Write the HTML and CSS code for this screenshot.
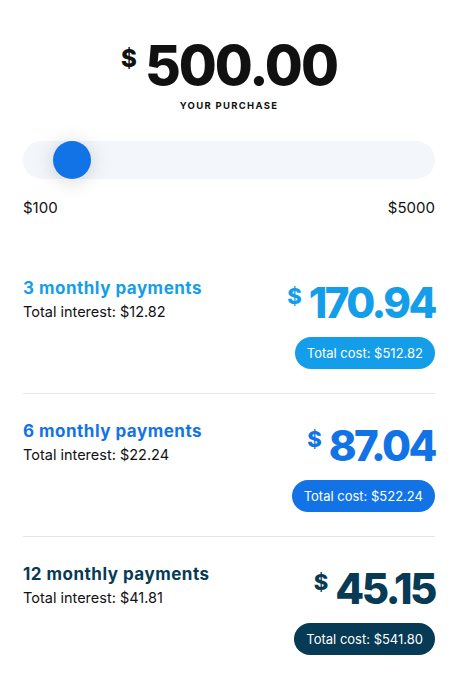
FILE: index.html
```html
<!DOCTYPE html>
<html>
<head>
<meta charset="utf-8">
<link rel="stylesheet" href="styles.css">
</head>
<body>
<main class="calc">
  <header class="purchase">
    <div class="amount">
      <span class="cur">$</span><span class="num">500.00</span>
    </div>
    <div class="caption">YOUR PURCHASE</div>
  </header>

  <div class="slider">
    <div class="track"><div class="thumb"></div></div>
    <div class="range"><span>$100</span><span>$5000</span></div>
  </div>

  <section class="plans">
    <div class="plan plan-3">
      <div class="info">
        <div class="title">3 monthly payments</div>
        <div class="interest">Total interest: $12.82</div>
      </div>
      <div class="price">
        <div class="monthly"><span class="cur">$</span><span class="num">170.94</span></div>
        <div class="pill">Total cost: $512.82</div>
      </div>
    </div>
    <div class="plan plan-6">
      <div class="info">
        <div class="title">6 monthly payments</div>
        <div class="interest">Total interest: $22.24</div>
      </div>
      <div class="price">
        <div class="monthly"><span class="cur">$</span><span class="num">87.04</span></div>
        <div class="pill">Total cost: $522.24</div>
      </div>
    </div>
    <div class="plan plan-12">
      <div class="info">
        <div class="title">12 monthly payments</div>
        <div class="interest">Total interest: $41.81</div>
      </div>
      <div class="price">
        <div class="monthly"><span class="cur">$</span><span class="num">45.15</span></div>
        <div class="pill">Total cost: $541.80</div>
      </div>
    </div>
  </section>
</main>
</body>
</html>
```

FILE: styles.css
```css
* { box-sizing: border-box; }
html, body { margin: 0; padding: 0; background: #fff; }
body {
  font-family: Inter, "Noto Sans", sans-serif;
  color: #111;
}
.calc {
  width: 457px;
  padding: 38px 22px 0 23px;
}
.purchase {
  display: flex;
  flex-direction: column;
  align-items: center;
}
.amount {
  display: flex;
  align-items: flex-start;
  gap: 8px;
  line-height: 1;
}
.amount .cur {
  font-size: 24px;
  font-weight: 800;
  margin-top: 9px;
}
.amount .num {
  font-size: 55px;
  font-weight: 800;
  letter-spacing: -2px;
}
.caption {
  margin-top: 7px;
  font-size: 9.5px;
  font-weight: 700;
  letter-spacing: 1.3px;
  line-height: 12px;
}
.slider { margin-top: 29px; }
.track {
  height: 38px;
  border-radius: 19px;
  background: #f3f6fb;
  padding-left: 30px;
}
.thumb {
  width: 38px;
  height: 38px;
  border-radius: 50%;
  background: #1273e6;
  box-shadow: 0 2px 20px rgba(0, 0, 0, 0.17);
}
.range {
  display: flex;
  justify-content: space-between;
  margin-top: 20px;
  font-size: 15px;
  line-height: 18px;
}
.plans { margin-top: 60px; }
.plan {
  display: flex;
  justify-content: space-between;
  align-items: flex-start;
  padding: 26px 0 24px;
  border-bottom: 1px solid #e6e6e6;
}
.plan:first-child { padding-top: 0; }
.plan:last-child { border-bottom: none; }
.title {
  font-size: 17px;
  font-weight: 700;
  line-height: 22px;
  letter-spacing: 0.5px;
}
.interest {
  font-size: 14.5px;
  line-height: 20px;
  margin-top: 3px;
}
.price {
  display: flex;
  flex-direction: column;
  align-items: flex-end;
  margin-top: 5px;
}
.monthly {
  display: flex;
  align-items: flex-start;
  gap: 7px;
  line-height: 1;
}
.monthly .cur {
  font-size: 22px;
  font-weight: 800;
  margin-top: 3px;
}
.monthly .num {
  font-size: 42px;
  font-weight: 800;
  letter-spacing: -2.5px;
}
.pill {
  margin-top: 13px;
  height: 32px;
  padding: 0 12px;
  border-radius: 16px;
  color: #fff;
  font-size: 13px;
  line-height: 32px;
}
.plan-3 .title, .plan-3 .monthly { color: #149ee9; }
.plan-3 .pill { background: #149ee9; }
.plan-6 .title, .plan-6 .monthly { color: #1273e6; }
.plan-6 .pill { background: #1273e6; }
.plan-12 .title, .plan-12 .monthly { color: #063a55; }
.plan-12 .pill { background: #063a55; }
```
